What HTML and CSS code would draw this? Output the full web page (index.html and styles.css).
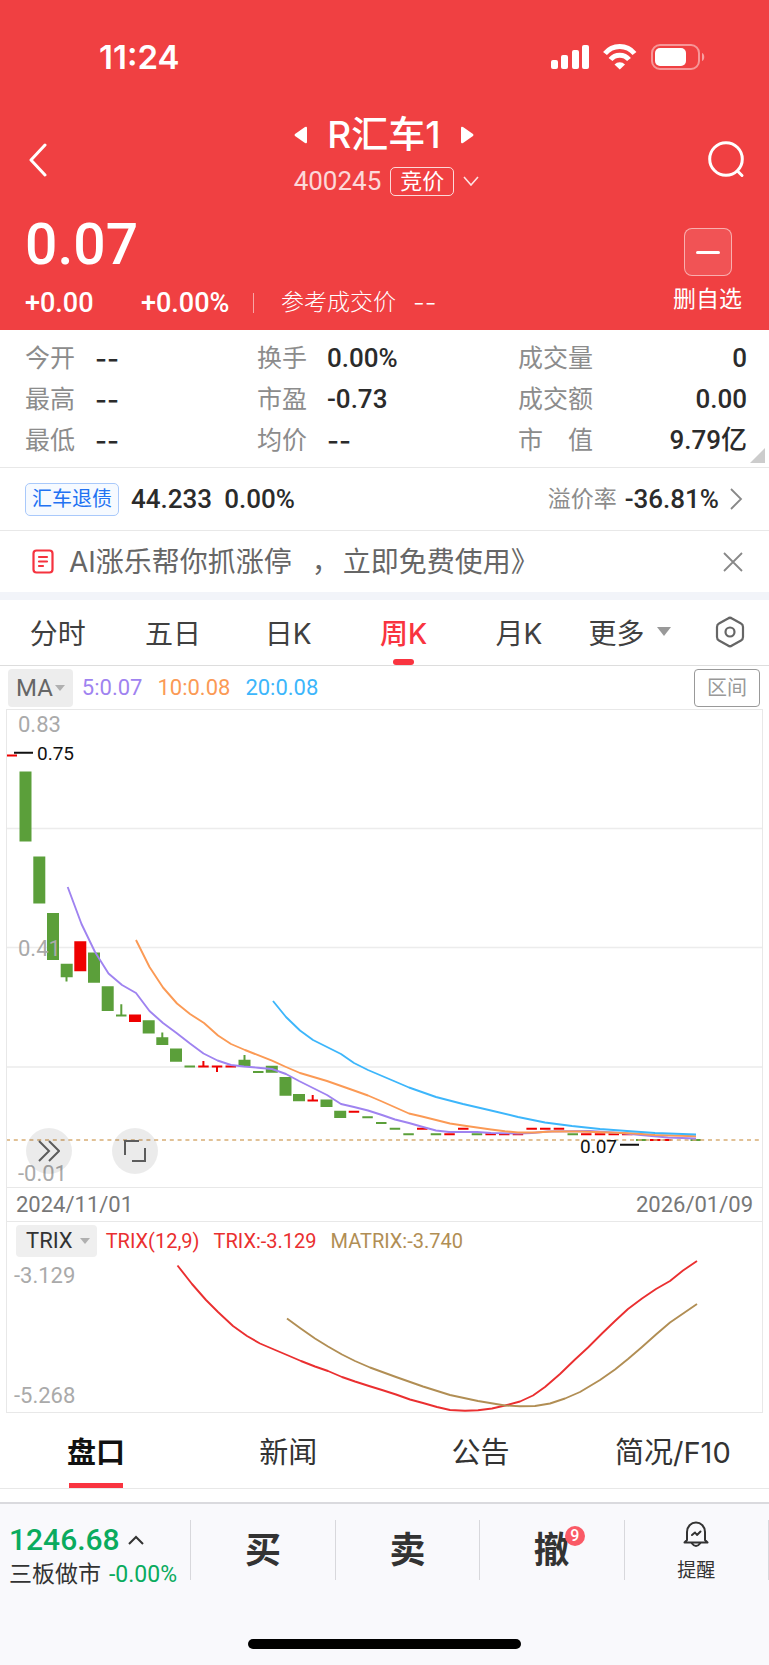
FILE: index.html
```html
<!DOCTYPE html>
<html lang="zh-CN">
<head>
<meta charset="utf-8">
<meta name="viewport" content="width=device-width, initial-scale=1">
<title>R汇车1 400245</title>
<link rel="stylesheet" href="styles.css">
</head>
<body>
<header class="header">
  <div class="status">
    <span class="time">11:24</span>
    <svg class="status-icons" width="156" height="28" viewBox="0 0 156 28" fill="#fff" aria-hidden="true">
      <rect x="1" y="17" width="7" height="9" rx="2"/><rect x="11" y="12" width="7" height="14" rx="2"/><rect x="22" y="7" width="7" height="19" rx="2"/><rect x="32" y="2" width="7" height="24" rx="2"/>
      <g fill="none" stroke="#fff" stroke-width="5"><path d="M55 10.500a19 19 0 0 1 29.500 0"/><path d="M60.500 16.500a12 12 0 0 1 18.500 0"/></g>
      <path d="M64.500 21.500a7.500 7.500 0 0 1 10.500 0L69.800 26.500z"/>
      <rect x="102" y="2" width="47" height="24" rx="8" fill="none" stroke="#fff" stroke-opacity=".45" stroke-width="2"/>
      <rect x="105" y="5" width="31" height="18" rx="5"/><path d="M152 10c3 1 3 7 0 8z" fill-opacity=".5"/>
    </svg>
  </div>
  <nav class="nav">
    <button class="icon-btn" aria-label="返回"><svg width="20" height="34" viewBox="0 0 20 34" fill="none" stroke="#fff" stroke-width="3" stroke-linecap="round" stroke-linejoin="round"><path d="M17 2 3 17 17 32"/></svg></button>
    <div class="heading">
      <div class="title-row">
        <button class="icon-btn" aria-label="上一只"><svg width="14" height="18" viewBox="0 0 14 18" fill="#fff"><path d="M11 1Q13 0 13 2V16Q13 18 11 17L1 10Q0 9 1 8z"/></svg></button>
        <h1 class="title">R汇车1</h1>
        <button class="icon-btn" aria-label="下一只"><svg width="14" height="18" viewBox="0 0 14 18" fill="#fff"><path d="M3 1Q1 0 1 2V16Q1 18 3 17L13 10Q14 9 13 8z"/></svg></button>
      </div>
      <div class="sub-row">
        <span class="code">400245</span><span class="auction">竞价</span>
        <svg width="16" height="10" viewBox="0 0 16 10" fill="none" stroke="#fff" stroke-opacity=".85" stroke-width="1.600"><path d="M1 1 8 9 15 1"/></svg>
      </div>
    </div>
    <button class="icon-btn search" aria-label="搜索"><svg width="38" height="40" viewBox="0 0 38 40" fill="none" stroke="#fff" stroke-width="3" stroke-linecap="round"><circle cx="19" cy="19" r="16.300"/><path d="M30.500 31 35 35.500"/></svg></button>
  </nav>
  <section class="quote">
    <div>
      <div class="price">0.07</div>
      <div class="change"><span class="delta">+0.00</span><span class="percent">+0.00%</span><span class="ref">参考成交价<span class="dash">--</span></span></div>
    </div>
    <button class="watch"><span class="minus"></span>删自选</button>
  </section>
</header>
<main>
  <section class="stats">
    <dl class="stat-col">
      <div><dt>今开</dt><dd class="none">--</dd></div><div><dt>最高</dt><dd class="none">--</dd></div><div><dt>最低</dt><dd class="none">--</dd></div>
    </dl>
    <dl class="stat-col">
      <div><dt>换手</dt><dd>0.00%</dd></div><div><dt>市盈</dt><dd>-0.73</dd></div><div><dt>均价</dt><dd class="none">--</dd></div>
    </dl>
    <dl class="stat-col wide">
      <div><dt>成交量</dt><dd>0</dd></div><div><dt>成交额</dt><dd>0.00</dd></div><div><dt>市　值</dt><dd>9.79亿</dd></div>
    </dl>
    <span class="corner"></span>
  </section>
  <a class="bond" href="#bond">
    <span class="bond-tag">汇车退债</span><span class="num bond-price">44.233</span><span class="num">0.00%</span>
    <span class="bond-label">溢价率</span><span class="num">-36.81%</span>
    <svg width="14" height="24" viewBox="0 0 14 24" fill="none" stroke="#888" stroke-width="1.800"><path d="M2 2 12 12 2 22"/></svg>
  </a>
  <aside class="notice">
    <svg width="22" height="26" viewBox="0 0 22 26" fill="none" stroke="#f5333f" stroke-width="2.200" stroke-linecap="round"><rect x="1.500" y="1.500" width="19" height="22" rx="3"/><path d="M7 8h8M7 12.500h8M7 17h4"/></svg>
    <a class="notice-text" href="#ai">AI涨乐帮你抓涨停<span class="comma">，</span>立即免费使用》</a>
    <button class="icon-btn" aria-label="关闭"><svg width="20" height="20" viewBox="0 0 20 20" fill="none" stroke="#888" stroke-width="1.800"><path d="M1 1 19 19M19 1 1 19"/></svg></button>
  </aside>
  <nav class="periods">
    <button>分时</button><button>五日</button><button>日K</button><button class="active">周K</button><button>月K</button>
    <button class="more">更多<span class="tri"></span></button>
    <button class="settings" aria-label="设置"><svg width="30" height="32" viewBox="0 0 30 32" fill="none" stroke="#666" stroke-width="2.200" stroke-linejoin="round"><path d="M13 2.500Q15 1 17 2.500L26 7.500Q28 8.500 28 11V21Q28 23.500 26 24.500L17 29.500Q15 31 13 29.500L4 24.500Q2 23.500 2 21V11Q2 8.500 4 7.500z"/><circle cx="15" cy="16" r="4.500"/></svg></button>
  </nav>
  <div class="ma-bar">
    <button class="indicator">MA<span class="tri small"></span></button>
    <span class="ma5">5:0.07</span><span class="ma10">10:0.08</span><span class="ma20">20:0.08</span>
    <button class="range">区间</button>
  </div>
  <div class="charts">
    <div class="kline">
      <svg class="plot" viewBox="7 710 755 477" role="img" aria-label="周K线">
        <g stroke="#ececec" stroke-width="1.500"><path d="M7 828.500H762M7 947.500H762M7 1067H762"/></g>
        <g fill="#5b9f3a">
          <path d="M19.500 771.500h12v70h-12zM33.300 856.500h12v47h-12zM47 913h12v47h-12zM60.700 963.700h12v13.500h-12zM88 952.400h12v30.400h-12zM101.700 986.300h12v24.700h-12zM142.700 1020.300h12v13.200h-12zM156.300 1037.300h12v7.700h-12zM170 1048.500h12v13.200h-12zM238.500 1059.800h12v6.500h-12zM265.800 1065.800h12v7h-12zM279.500 1077h12v18.700h-12zM293 1094h12v7.300h-12zM320.500 1099.500h12v7.500h-12zM334.200 1110.800h12v7.200h-12z"/>
        </g>
        <g fill="#e00">
          <path d="M74.300 941.300h12v30h-12zM129 1014.500h12v7.500h-12z"/>
        </g>
        <g stroke="#5b9f3a" stroke-width="2">
          <path d="M66.500 977V981.500M121.300 1004.300V1015M116 1015.500h10.500M162.300 1032.500V1038M184.500 1066.400h10.500M244.500 1055V1060M253 1072h10.500M362.300 1117.300h10.500M376 1123h10.500M389.700 1128.700h10.500M403.300 1134.300h10.500M430.700 1134.300h10.500M471.700 1134.300h10.500M567.500 1134.300h10.500M636 1140h10.500M690.500 1140h10.500"/>
        </g>
        <g stroke="#e00" stroke-width="2">
          <path d="M7 755.500H17M198.200 1066.400h10.500M203.400 1061V1066M211.800 1066.400h10.500M217 1066V1072M225.500 1066.400h10.500M307.500 1100.500h10.500M312.700 1095V1100M348.700 1111.700h10.500M417 1128.700h10.500M444.300 1134.300h10.500M458 1128.700h10.500M485.400 1134.300h10.500M499 1134.300h10.500M512.700 1134.300h10.500M526.400 1128.700h10.500M540 1128.700h10.500M553.700 1128.700h10.500M581 1134.300h10.500M594.800 1134.300h10.500M608.500 1134.300h10.500M622 1134.300h10.500M650 1140h10.500M663.500 1140h8"/>
        </g>
        <path d="M6 1140H762" stroke="#d8ad74" stroke-width="1.700" stroke-dasharray="4 3.800"/>
        <g fill="none" stroke-width="1.900" stroke-linejoin="round">
          <polyline stroke="#9f83f0" points="67.700,887 81.500,924 95,952 108.500,973.500 122,985 136,993 149.500,1011 163,1023 176.500,1033 190,1043.500 203.500,1053.500 217.500,1060.500 231,1065 244,1066.500 258,1067.700 272,1069 286,1074 299,1081 313,1088 327,1095 341,1104 354,1107 368,1110.500 382,1115 395,1119.500 409,1123 423,1127 436,1130.500 449,1132 477,1132 491,1133 518,1133.500 532,1133 548,1131.500 590,1131 620,1133 641,1135 668,1137.500 696,1138.500"/>
          <polyline stroke="#fb9a55" points="136,940 149.500,967 163,987.500 177,1003.500 190,1014 204,1023 218,1035.500 231,1044 245,1050 272,1060.700 286,1067 300,1073 327,1081 354,1090.500 368,1095.500 382,1101.500 409,1113.500 422,1116.500 450,1123.500 463,1125.500 491,1129.500 505,1131.300 518,1132.500 535,1132.500 552,1131.500 580,1131.500 610,1132.500 635,1133.500 655,1135 696,1136.300"/>
          <polyline stroke="#3db6fb" points="273,1001 286,1017 300,1030.500 313,1040 341,1054 354,1063 368,1070 395,1081.500 409,1087.500 436,1097 463,1104 491,1110.500 518,1117 545,1122.500 572,1126 600,1129 627,1131 655,1133 696,1134.500"/>
        </g>
        <path d="M14 752.700H33M620 1144.700H639" stroke="#111" stroke-width="2"/>
        <g class="axis"><text x="18" y="732">0.83</text><text x="18" y="956">0.41</text><text x="18" y="1181">-0.01</text></g>
        <g class="mark"><text x="37" y="760">0.75</text><text x="580" y="1153">0.07</text></g>
      </svg>
      <div class="tools">
        <button aria-label="快进"><svg width="22" height="22" viewBox="0 0 22 22" fill="none" stroke="#5c5c5c" stroke-width="2"><path d="M1 1 11 11 1 21M11 1 21 11 11 21"/></svg></button>
        <button aria-label="全屏"><svg width="22" height="22" viewBox="0 0 22 22" fill="none" stroke="#5c5c5c" stroke-width="2"><path d="M1 15V1H15M21 8V21H8"/></svg></button>
      </div>
    </div>
    <div class="dates"><span>2024/11/01</span><span>2026/01/09</span></div>
    <div class="trix">
      <svg class="plot" viewBox="7 1222 755 190" role="img" aria-label="TRIX">
        <g fill="none" stroke-width="1.900" stroke-linejoin="round">
          <polyline stroke="#ea2f30" points="177.500,1265.500 192,1284 206,1300 218,1312 233,1326 247,1336 260,1343.500 274,1349.500 287,1355 301,1361 315,1366.500 328,1371 342,1377 355,1381.500 369,1386 382,1390 396,1394.500 410,1399.500 423,1403 437,1407 450,1410 465,1410.800 478,1410.300 492,1408.500 505,1405.500 520,1401.500 533,1395.500 545,1387 560,1374 575,1359.500 588,1347.500 602,1333.500 615,1321 628,1309 642,1298.500 656,1289 670,1281 683,1270.500 697,1261"/>
          <polyline stroke="#b18e54" points="287,1318.500 300,1328 315,1338.500 328,1346.500 342,1354.500 355,1361 370,1367.500 396,1377 423,1386.500 450,1395 478,1401 505,1405.500 520,1406.300 535,1406 550,1403.500 565,1398.500 580,1392 600,1380 615,1369.500 628,1359 642,1347 656,1334.500 670,1322.500 697,1304"/>
        </g>
        <g class="axis"><text x="14" y="1283">-3.129</text><text x="14" y="1403">-5.268</text></g>
      </svg>
      <div class="trix-bar">
        <button class="indicator dark">TRIX<span class="tri small"></span></button>
        <span class="red">TRIX(12,9)</span><span class="red">TRIX:-3.129</span><span class="brown">MATRIX:-3.740</span>
      </div>
    </div>
  </div>
  <nav class="sections">
    <button class="active">盘口</button><button>新闻</button><button>公告</button><button>简况/F10</button>
  </nav>
</main>
<footer class="footer">
  <div class="actions">
    <button class="index">
      <span class="index-top"><span class="index-value">1246.68</span><svg width="16" height="10" viewBox="0 0 16 10" fill="none" stroke="#333" stroke-width="2"><path d="M1 9 8 2 15 9"/></svg></span>
      <span class="index-bottom">三板做市<span class="index-change">-0.00%</span></span>
    </button>
    <button class="trade">买</button>
    <button class="trade">卖</button>
    <button class="trade"><span class="cancel">撤<span class="badge">9</span></span></button>
    <button class="remind"><svg width="28" height="28" viewBox="0 0 28 28" fill="none" stroke="#333" stroke-width="2" stroke-linejoin="round" stroke-linecap="round"><path d="M5 20V12A9 9.500 0 0 1 23 12V20L25.500 22.500H2.500zM9.500 23Q14 29 18.500 23"/><path d="M10 15 13 12.500 15 15 18.500 11.500"/></svg>提醒</button>
  </div>
  <div class="home"></div>
</footer>
</body>
</html>
```
FILE: styles.css
```css
* { box-sizing: border-box; }
body { margin: 0; background: #fff; color: #333; font-family: Inter, "Noto Sans CJK SC", sans-serif; }
button { margin: 0; padding: 0; border: 0; background: none; color: inherit; font: inherit; }
a { color: inherit; text-decoration: none; }
svg { display: block; flex: none; }
dl, dd, h1 { margin: 0; }

.header { background: #f04042; color: #fff; }
.status { display: flex; justify-content: space-between; align-items: center; height: 111px; padding: 2px 63px 0 99px; }
.time { font-size: 33px; font-weight: 600; }
.nav { display: grid; grid-template-columns: 1fr auto 1fr; align-items: center; padding: 0 24px 0 28px; }
.search { justify-self: end; }
.heading { display: flex; flex-direction: column; align-items: center; padding-bottom: 6px; }
.title-row { display: flex; align-items: center; gap: 19px; height: 48px; padding-right: 5px; }
.title { font-size: 37px; line-height: 48px; font-weight: 500; }
.sub-row { display: flex; align-items: center; gap: 9px; height: 44px; }
.code { font-family: Roboto, sans-serif; font-size: 26px; opacity: .8; }
.auction { border: 1px solid #fffc; border-radius: 5px; padding: 0 9px; font-size: 22px; line-height: 27px; }
.quote { display: flex; justify-content: space-between; align-items: flex-start; padding: 0 27px 5px 25px; }
.price { font: 500 57px/72px Roboto, sans-serif; }
.change { display: flex; align-items: center; height: 44px; font: 500 27px/44px Roboto, "Noto Sans CJK SC", sans-serif; }
.delta { width: 116px; }
.percent { width: 112px; }
.ref { display: flex; padding-left: 27px; border-left: 1px solid #fff8; line-height: 20px; font-weight: 300; font-size: 23px; }
.dash { padding-left: 17px; font-family: Inter, sans-serif; font-size: 26px; }
.watch { display: flex; flex-direction: column; align-items: center; padding-top: 19px; font-size: 23px; line-height: 46px; }
.minus { display: flex; align-items: center; justify-content: center; width: 48px; height: 48px; border: 1px solid #fff8; border-radius: 8px; background: #ffffff1a; }
.minus::before { content: ""; width: 24px; height: 3px; border-radius: 2px; background: #fff; }

.stats { position: relative; display: grid; grid-template-columns: 232fr 261fr 229fr; padding: 8px 22px 6px 25px; border-bottom: 1px solid #e8e8e8; }
.stat-col > div { display: flex; align-items: center; gap: 20px; height: 41px; }
.wide > div { justify-content: space-between; }
dt { color: #8c8c8c; font-size: 25px; line-height: 41px; }
dd, .num { color: #2b2b2b; font: 500 26px/41px Roboto, "Noto Sans CJK SC", sans-serif; }
.none { font-family: Inter, sans-serif; }
.corner { position: absolute; right: 4px; bottom: 4px; border-left: 15px solid transparent; border-bottom: 15px solid #ccc; }
.bond { display: flex; align-items: center; height: 63px; padding: 0 26px 0 25px; border-bottom: 1px solid #e8e8e8; }
.bond-tag { border: 1px solid #a9c9fb; border-radius: 5px; background: #f6faff; color: #2272f2; padding: 0 6px; font-size: 20px; line-height: 31px; }
.bond-price { padding: 0 12px; }
.bond-label { margin-left: auto; padding-right: 8px; color: #8c8c8c; font-size: 23px; line-height: 41px; }
.bond svg { margin-left: 10px; }
.notice { display: flex; align-items: center; height: 61px; padding: 0 26px 0 32px; }
.notice-text { flex: 1; padding-left: 15px; color: #666; font-size: 28px; line-height: 40px; }
.comma { padding: 0 3px 0 20px; }
.periods { display: flex; border-top: 8px solid #f2f4f9; border-bottom: 1px solid #ddd; height: 74px; font-size: 28px; color: #404040; }
.periods button { position: relative; flex: 115; display: flex; align-items: center; justify-content: center; padding-bottom: 2px; }
.periods .active { color: #f93440; font-weight: 500; }
.periods .active::after { content: ""; position: absolute; bottom: 0; width: 21px; height: 6px; border-radius: 3px; background: #f93440; }
.periods .more { flex: 106; gap: 12px; }
.periods .settings { flex: 78; padding-right: 0; padding-left: 8px; }
.tri { border: 7px solid transparent; border-top: 9px solid #999; border-bottom: 0; }
.tri.small { border-width: 6px 5px 0; border-top-color: #b0b0b0; }

.ma-bar { display: flex; align-items: center; gap: 15px; height: 44px; padding: 0 9px 0 8px; font: 400 22px/38px Roboto, sans-serif; }
.indicator { display: flex; align-items: center; gap: 2px; height: 38px; padding: 0 8px; border-radius: 4px; background: #ededed; color: #666; font-size: 24px; }
.ma-bar .indicator { margin-right: -6px; }
.ma5 { color: #9f83f0; }
.ma10 { color: #fb9a55; }
.ma20 { color: #3db6fb; }
.range { margin-left: auto; width: 66px; height: 38px; border: 1px solid #999; border-radius: 4px; color: #999; font-size: 20px; line-height: 36px; }
.charts { margin: 0 7px; outline: 1px solid #e8e8e8; }
.kline, .trix { position: relative; }
.plot { width: 100%; height: auto; }
.axis { font: 400 22px Roboto, sans-serif; fill: #aaa; }
.mark { font: 400 19px Roboto, sans-serif; fill: #111; }
.tools { position: absolute; left: 19px; bottom: 13px; display: flex; gap: 40px; }
.tools button { display: flex; align-items: center; justify-content: center; width: 46px; height: 46px; border-radius: 50%; background: #00000014; }
.dates { display: flex; justify-content: space-between; padding: 0 9px; border-top: 1px solid #e8e8e8; border-bottom: 1px solid #e8e8e8; color: #777; font: 400 22px/33px Roboto, sans-serif; }
.trix-bar { position: absolute; left: 9px; top: 3px; display: flex; align-items: center; gap: 9px; font: 400 20px/32px Roboto, sans-serif; }
.dark { height: 32px; padding: 0 7px 0 10px; gap: 7px; color: #333; font-size: 22px; background: #efefef; }
.red { color: #ea2f30; padding-right: 5px; }
.brown { color: #b18e54; }

.sections { display: flex; height: 77px; border-bottom: 1px solid #e8e8e8; font-size: 29px; color: #333; }
.sections button { position: relative; flex: 1; display: flex; align-items: center; justify-content: center; padding-bottom: 1px; }
.sections .active { color: #111; font-weight: 700; }
.sections .active::after { content: ""; position: absolute; bottom: 0; width: 54px; height: 5px; background: #f93440; }
.footer { margin-top: 13px; padding-bottom: 16px; border-top: 2px solid #dadade; background: #f9f9fc; }
.actions { display: flex; padding-top: 16px; height: 76px; }
.actions > button { flex: 144; height: 60px; border-right: 1px solid #d8d8dc; }
.actions .index { flex: 182; display: flex; flex-direction: column; padding: 2px 0 0 9px; }
.index-top { display: flex; align-items: center; gap: 8px; }
.index-value { color: #0aab5e; font: 500 30px/35px Roboto, sans-serif; }
.index-bottom { display: flex; align-items: center; gap: 8px; font-size: 23px; line-height: 35px; white-space: nowrap; }
.index-change { color: #0aab5e; font: 400 23px/35px Roboto, sans-serif; }
.trade { font-size: 36px; font-weight: 700; line-height: 60px; }
.cancel { position: relative; }
.badge { position: absolute; top: -2px; right: -15px; width: 20px; height: 20px; border-radius: 50%; background: #fa5a66; color: #fff; font: 500 16px/20px Roboto, sans-serif; text-align: center; }
.remind { display: flex; flex-direction: column; align-items: center; gap: 10px; font-size: 19px; line-height: 26px; }
.home { width: 273px; height: 10px; margin: 59px auto 0; border-radius: 5px; background: #000; }
```
